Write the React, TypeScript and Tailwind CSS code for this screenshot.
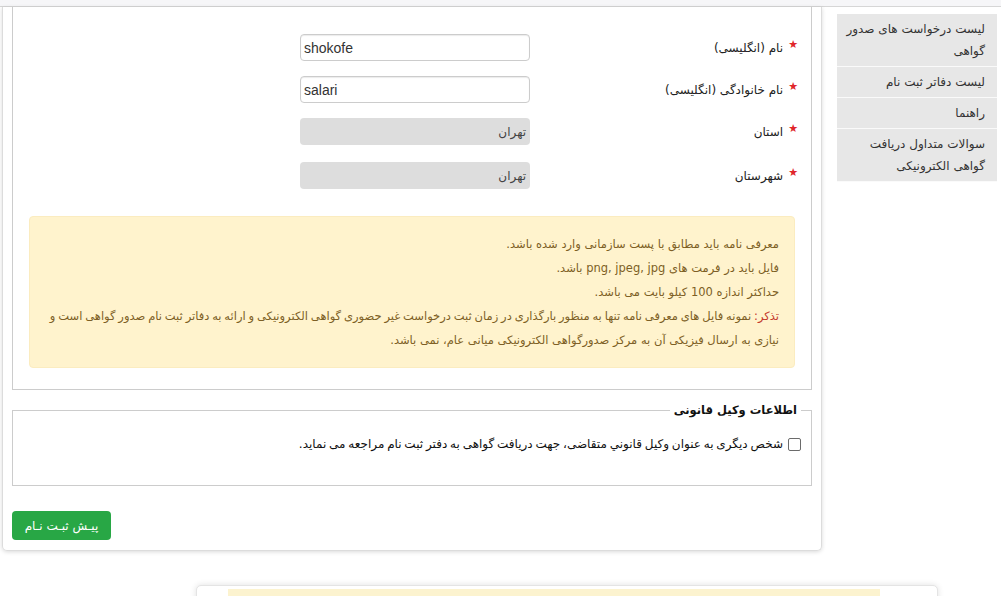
import React from 'react';

const fa = { fontFamily: '"DejaVu Sans", Tahoma, sans-serif' };

// آیتم‌های منوی کناری؛ شکست خط مطابق تصویر
const menu: string[][] = [
  ['لیست درخواست های صدور', 'گواهی'],
  ['لیست دفاتر ثبت نام'],
  ['راهنما'],
  ['سوالات متداول دریافت', 'گواهی الکترونیکی'],
];

const fields = [
  { label: 'نام (انگلیسی)', value: 'shokofe', disabled: false, mt: '' },
  { label: 'نام خانوادگی (انگلیسی)', value: 'salari', disabled: false, mt: 'mt-[15px]' },
  { label: 'استان', value: 'تهران', disabled: true, mt: 'mt-[15px]' },
  { label: 'شهرستان', value: 'تهران', disabled: true, mt: 'mt-[17px]' },
];

function Field({ label, value, disabled, mt }: (typeof fields)[number]) {
  return (
    <div className={`flex items-center h-[27px] pr-[13px] ${mt}`}>
      <div className="w-[268px] flex items-center gap-[5px] text-[12px] text-[#222]">
        <span className="text-[#e0262b] text-[11px] -mt-[4px]">★</span>
        <span>{label}</span>
      </div>
      {disabled ? (
        <div className="w-[230px] h-[27px] rounded-[4px] bg-[#dddddd] flex items-center px-[4px] text-[12px] text-[#444]">
          {value}
        </div>
      ) : (
        <input
          readOnly
          dir="ltr"
          value={value}
          className="w-[230px] h-[27px] rounded-[4px] border border-[#cccccc] bg-white px-[3px] text-[14px] text-[#333] shadow-[inset_0_1px_1px_rgba(0,0,0,0.08)] outline-none"
          style={{ fontFamily: '"Liberation Sans", Arial, sans-serif' }}
        />
      )}
    </div>
  );
}

export default function App() {
  return (
    <div dir="rtl" className="h-[596px] overflow-hidden bg-white" style={fa}>
      <div className="h-[7px] bg-[#f6f6f8] border-b border-[#d6d6d6]" />

      <div className="flex items-start pr-[4px] pl-[2px] gap-[15px]">
        {/* منوی کناری */}
        <div className="w-[160px] mt-[7px] bg-[#e7e7e7]">
          {menu.map((lines, i) => (
            <div
              key={i}
              className="pr-[12px] pl-[4px] py-[4px] leading-[22px] text-[12px] text-[#333] border-b border-[#fafafa] whitespace-nowrap"
            >
              {lines.map((l) => (
                <div key={l}>{l}</div>
              ))}
            </div>
          ))}
        </div>

        {/* کارت فرم */}
        <div className="w-[820px] border-x border-b border-[#dcdcdc] rounded-b-[5px] shadow-[0_1px_4px_rgba(0,0,0,0.15)] px-[9px] pb-[10px]">
          <div className="border-x border-b border-[#cccccc] pt-[27px] pb-[21px]">
            {fields.map((f) => (
              <Field key={f.label} {...f} />
            ))}

            <div className="mt-[27px] mx-[16px] rounded-[4px] border border-[#fbecc0] bg-[#fff3cd] px-[15px] py-[15px] leading-[24px] text-[11.5px] text-[#7d5f25]">
              <div>معرفی نامه باید مطابق با پست سازمانی وارد شده باشد.</div>
              <div>فایل باید در فرمت های png, jpeg, jpg باشد.</div>
              <div>حداکثر اندازه 100 کیلو بایت می باشد.</div>
              <div className="whitespace-nowrap [word-spacing:-0.8px]">
                <span className="text-[#c43a2e]">تذکر:</span> نمونه فایل های معرفی نامه تنها به منظور بارگذاری در زمان ثبت درخواست غیر حضوری گواهی الکترونیکی و ارائه به دفاتر ثبت نام صدور گواهی است و
              </div>
              <div>نیازی به ارسال فیزیکی آن به مرکز صدورگواهی الکترونیکی میانی عام، نمی باشد.</div>
            </div>
          </div>

          <fieldset className="mt-[11px] border border-[#cccccc] px-[10px] pb-[31px]">
            <legend className="px-[4px] text-[11.5px] font-bold text-[#111] leading-[18px]">
              اطلاعات وکیل قانونی
            </legend>
            <label className="mt-[15px] flex items-center gap-[5px] h-[20px] text-[12px] text-[#111]">
              <input
                type="checkbox"
                className="appearance-none w-[13px] h-[13px] border border-[#6b6b6b] rounded-[2px] bg-white"
              />
              <span className="[word-spacing:-1px]">
                شخص دیگری به عنوان وکیل قانوني متقاضی، جهت دریافت گواهی به دفتر ثبت نام مراجعه می نماید.
              </span>
            </label>
          </fieldset>

          <div className="flex justify-end mt-[25px]">
            <button className="w-[99px] h-[29px] rounded-[4px] bg-[#28a745] text-white text-[12px]">
              پیـش ثبـت نـام
            </button>
          </div>
        </div>
      </div>

      {/* کارت بعدی */}
      <div dir="ltr" className="flex mt-[34px] pl-[196px]">
        <div className="w-[742px] h-[40px] border border-[#e4e4e4] rounded-t-[5px] shadow-[0_0_6px_rgba(0,0,0,0.12)] bg-white pt-[3px] pl-[31px]">
          <div className="w-[652px] h-[30px] bg-[#fcf3cf]" />
        </div>
      </div>
    </div>
  );
}
